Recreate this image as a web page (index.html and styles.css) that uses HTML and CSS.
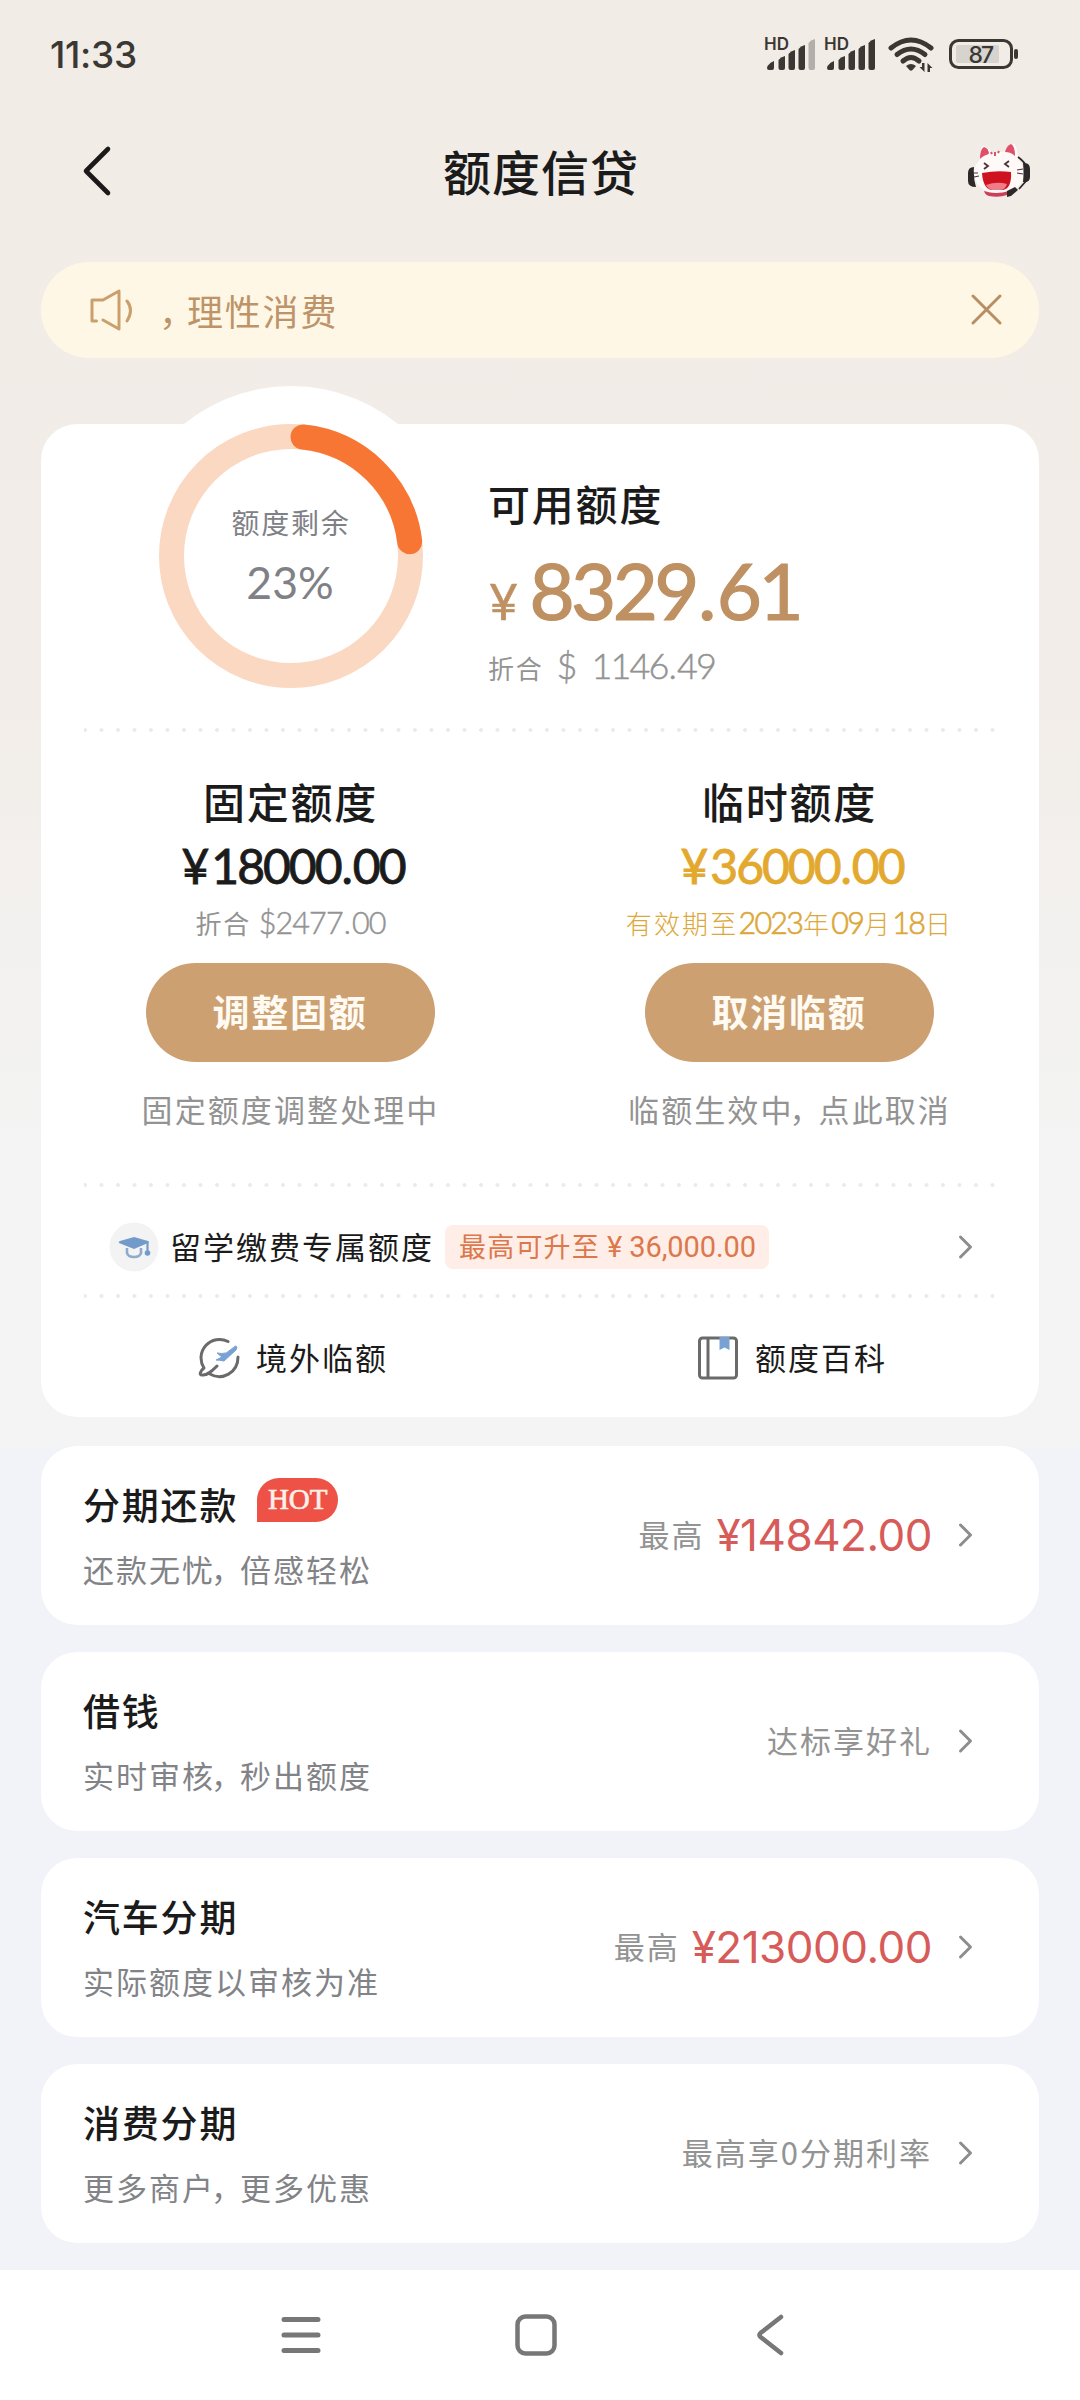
FILE: index.html
```html
<!DOCTYPE html>
<html lang="zh-CN">
<head>
<meta charset="utf-8">
<title>额度信贷</title>
<link rel="stylesheet" href="styles.css">
</head>
<body>
<div class="screen">
  <div class="status">
    <span class="time">11:33</span>
    <svg class="status-icons" width="260" height="44" viewBox="760 30 260 44" fill="#3b3733">
      <g id="sim">
        <text x="764" y="50" class="hd">HD</text>
        <path d="M767.500 66q3-4 6.500-5v7q0 2-2 2h-3q-2 0-2-2z"/>
        <path d="M778.500 60q2-3 6.500-4v12q0 2-2 2h-2.500q-2 0-2-2z"/>
        <path d="M788.500 54q2-3 6.500-4v18q0 2-2 2h-2.500q-2 0-2-2z"/>
        <path d="M798.500 49q2-3 6.500-4v23q0 2-2 2h-2.500q-2 0-2-2z"/>
      </g>
      <path d="M808.500 43q2-3 6.500-4v29q0 2-2 2h-2.500q-2 0-2-2z" fill="#b2aeaa"/>
      <use href="#sim" x="60"/>
      <path d="M868.500 43q2-3 6.500-4v29q0 2-2 2h-2.500q-2 0-2-2z"/>
      <g fill="none" stroke="#3b3733" stroke-width="5" stroke-linecap="round">
        <path d="M891 48q20-16 40 0"/><path d="M897 54.500q14-11 28 0"/><path d="M903 61q8-7 16 0"/>
      </g>
      <path d="M906 66q5-4 10 0l-3.500 4q-1.500 1.500-3 0z"/>
      <path d="M924.500 63v9l-5-5h2.500v-4zM927.500 72v-9l5 5h-2.500v4z"/>
      <rect x="950.500" y="40.500" width="61" height="27" rx="8" fill="none" stroke="#3b3733" stroke-width="3"/>
      <rect x="956" y="45" width="43" height="18" rx="2" fill="#d7d3cf"/>
      <rect x="1014" y="49" width="4" height="10" rx="2"/>
      <text x="968.500" y="62.500" class="battery">87</text>
    </svg>
  </div>

  <header class="header">
    <svg width="32" height="54" viewBox="0 0 32 54" fill="none" stroke="#1c1a19" stroke-width="4.600" stroke-linecap="round" stroke-linejoin="round"><path d="M26 5 4 27l22 22"/></svg>
    <h1 class="title">额度信贷</h1>
    <svg width="64" height="56" viewBox="0 0 64 56">
      <path d="M12 25 14 6q1-5 5-2l8 6 12-2 5-6q4-3 5 2l3 14z" fill="#fffafa"/>
      <path d="M13 16q0-10 4-12 5 1 5 8-5 0-9 4zM38 9q2-7 6-8 4 2 4 12-4-4-10-4z" fill="#e0506a"/>
      <ellipse cx="32" cy="30" rx="25" ry="21" fill="#fff9f8"/>
      <path d="M28 9v4M24 9l1 2M32 8l-1 2" stroke="#d4546a" stroke-width="2"/>
      <path d="M17 20l4 3-4 3M42 18l-4 3 4 3" fill="none" stroke="#47343a" stroke-width="1.800"/>
      <path d="M6 30h5M7 34l5-1M50 27l6-1M50 30l6 1" fill="none" stroke="#47343a" stroke-width="1.200"/>
      <path d="M15 30q15-3 29-1 1 16-8 18H24q-8-2-9-17z" fill="#cf1220"/>
      <path d="M19 42q11-4 21-1-2 6-7 6h-8q-4-1-6-5z" fill="#ef7d87"/>
      <path d="M17 48q12 4 25 0l-2 4q-8 3-18 1-4-1-5-5z" fill="#cb4059"/>
      <path d="M7 24q-6 0-6 6v8q0 6 8 6-3-10-2-20zM56 20q7-1 7 6v8q0 6-7 5 1-9 0-19z" fill="#2d2929"/>
      <path d="M51 14q7 5 9 11M60 37l-8 9" fill="none" stroke="#2d2929" stroke-width="1.800"/>
      <path d="m40 48 8-4 3 3-7 6-4 1z" fill="#2d2929"/>
    </svg>
  </header>

  <div class="notice">
    <svg width="46" height="44" viewBox="0 0 46 44" fill="none" stroke="#cb9f6c" stroke-width="3" stroke-linecap="round" stroke-linejoin="round"><path d="M7.500 33H3V12h11L30 3v38l-16-9M38 13q7 9 0 20"/></svg>
    <span class="notice-text"><span class="lead">，</span>理性消费</span>
    <svg width="34" height="34" viewBox="0 0 34 34" stroke="#b98e60" stroke-width="3" stroke-linecap="round"><path d="M3 3l27 27M30 3 3 30"/></svg>
  </div>

  <main class="quota">
    <section class="summary">
      <div class="dial">
        <svg width="340" height="340" viewBox="-170 -170 340 340" fill="none">
          <circle r="170" fill="#fff"/>
          <circle r="119.500" stroke="#fbd8c2" stroke-width="25"/>
          <path d="M12-119A119.500 119.500 0 0 1 118.700-14.300" stroke="#f87633" stroke-width="25" stroke-linecap="round"/>
        </svg>
        <div class="dial-text"><span class="dial-label">额度剩余</span><span class="dial-value">23%</span></div>
      </div>
      <div class="available">
        <h2 class="heading">可用额度</h2>
        <div class="big"><span class="yen">¥</span>8329<span class="big-dot">.</span>61</div>
        <div class="converted">折合<span class="usd-lg"><i class="dollar">$</i>1146<span class="dot">.</span>49</span></div>
      </div>
    </section>
    <div class="dots"></div>
    <section class="limits">
      <div class="limit">
        <h2 class="heading">固定额度</h2>
        <div class="amount"><span class="sign">¥</span>18000<span class="dot">.</span>00</div>
        <div class="sub">折合 <span class="num-sm">$2477<span class="dot">.</span>00</span></div>
        <button class="btn">调整固额</button>
        <div class="note">固定额度调整处理中</div>
      </div>
      <div class="limit">
        <h2 class="heading">临时额度</h2>
        <div class="amount gold"><span class="sign">¥</span>36000<span class="dot">.</span>00</div>
        <div class="sub expiry">有效期至<span class="num-date">2023</span>年<span class="num-date">09</span>月<span class="num-date">18</span>日</div>
        <button class="btn">取消临额</button>
        <div class="note">临额生效中<span class="comma">，</span>点此取消</div>
      </div>
    </section>
    <div class="dots"></div>
    <section class="study">
      <svg width="50" height="50" viewBox="0 0 50 50"><circle cx="25" cy="25" r="24.500" fill="#f3f3f4"/><path d="M10 21q-1-1 1-2l14-4 14 4q2 1 0 2l-14 6z" fill="#729bca"/><path d="M18 26v5q1 4 7 4t7-4v-5" fill="none" stroke="#8eaacc" stroke-width="2.600"/><path d="M38.500 20v10" stroke="#729bca" stroke-width="2.200"/><circle cx="38.500" cy="31" r="2.800" fill="#729bca"/></svg>
      <span class="study-name">留学缴费专属额度</span>
      <span class="tag">最高可升至<span class="tag-num"> ¥ 36,000.00</span></span>
      <svg class="chevron" width="16" height="26" viewBox="0 0 16 26"><path d="m2.500 3 10 10-10 10"/></svg>
    </section>
    <div class="dots"></div>
    <section class="links">
      <div class="link">
        <svg width="42" height="42" viewBox="0 0 42 42" fill="none" stroke="#6b6a6a" stroke-width="3" stroke-linecap="round" stroke-linejoin="round"><path d="M30 4.500A18.500 18.500 0 0 0 6 31c-4 3-5 7-2 7 5 1 10-4 15-9M12 37c12 7 28-1 28-17"/><path d="M38 9q2 1 0 4L26 24q-5-1-8-1l4-2 2-1q-3-2-5-4 5 1 9 0z" fill="#78a2d4" stroke="#78a2d4" stroke-width="1"/></svg>
        <span>境外临额</span>
      </div>
      <div class="link">
        <svg width="42" height="44" viewBox="0 0 42 44" fill="none" stroke="#6b6a6a" stroke-width="3"><rect x="2.500" y="2" width="37" height="40" rx="3"/><path d="M11 2v40"/><path d="M22.500 1h10v13l-5-2.500-5 2.500z" fill="#78a2d4" stroke="none"/></svg>
        <span>额度百科</span>
      </div>
    </section>
  </main>

  <div class="product">
    <div class="info"><div class="name">分期还款<span class="hot">HOT</span></div><div class="desc">还款无忧<span class="comma">，</span>倍感轻松</div></div>
    <div class="offer">最高<span class="price">¥14842.00</span></div>
    <svg class="chevron" width="16" height="26" viewBox="0 0 16 26"><path d="m2.500 3 10 10-10 10"/></svg>
  </div>
  <div class="product">
    <div class="info"><div class="name">借钱</div><div class="desc">实时审核<span class="comma">，</span>秒出额度</div></div>
    <div class="offer">达标享好礼</div>
    <svg class="chevron" width="16" height="26" viewBox="0 0 16 26"><path d="m2.500 3 10 10-10 10"/></svg>
  </div>
  <div class="product">
    <div class="info"><div class="name">汽车分期</div><div class="desc">实际额度以审核为准</div></div>
    <div class="offer">最高<span class="price">¥213000.00</span></div>
    <svg class="chevron" width="16" height="26" viewBox="0 0 16 26"><path d="m2.500 3 10 10-10 10"/></svg>
  </div>
  <div class="product">
    <div class="info"><div class="name">消费分期</div><div class="desc">更多商户<span class="comma">，</span>更多优惠</div></div>
    <div class="offer">最高享0分期利率</div>
    <svg class="chevron" width="16" height="26" viewBox="0 0 16 26"><path d="m2.500 3 10 10-10 10"/></svg>
  </div>

  <nav class="navbar">
    <svg width="42" height="42" viewBox="0 0 42 42" stroke="#777" stroke-width="5" stroke-linecap="round"><path d="M4 5.500h34M4 21h34M4 36.500h34"/></svg>
    <svg width="42" height="42" viewBox="0 0 42 42" fill="none" stroke="#777" stroke-width="4.500"><rect x="2.500" y="2.500" width="37" height="37" rx="8"/></svg>
    <svg width="42" height="42" viewBox="0 0 42 42" fill="none" stroke="#777" stroke-width="4.500" stroke-linecap="round" stroke-linejoin="round"><path d="M31 3 10.500 19q-2 2 0 4L31 39"/></svg>
  </nav>
</div>
</body>
</html>
```

FILE: styles.css
```css
* { box-sizing: border-box; }
body {
  margin: 0;
  font-family: "Noto Sans CJK SC", sans-serif;
  color: #1c1b1b;
}
svg { display: block; flex: none; }
h1, h2 { margin: 0; font-weight: 500; }

.screen {
  width: 1080px;
  height: 2400px;
  overflow: hidden;
  display: flex;
  flex-direction: column;
  background: linear-gradient(#f1ece6 0, #f2ede8 700px, #f3f2f1 1000px, #f4f4f4 1200px, #f4f4f4 1444px, #f2f3f8 1450px);
}

.status {
  height: 108px;
  padding: 0 60px 0 50px;
  display: flex;
  justify-content: space-between;
  align-items: center;
}
.time { font: 500 37px/40px Inter, sans-serif; color: #3b3733; margin-top: 2px; letter-spacing: -.3px; }
.status-icons { margin-bottom: 4px; }
.hd { font: 600 17px Inter, sans-serif; }
.battery { font: 500 23px Inter, sans-serif; letter-spacing: -2px; }

.header {
  height: 154px;
  padding: 0 49px 28px 82px;
  display: flex;
  align-items: center;
  justify-content: space-between;
}
.title { font-size: 48px; letter-spacing: 1px; line-height: 60px; margin: 0 0 2px 1px; }

.notice {
  height: 96px;
  margin: 0 41px 66px;
  padding: 0 35px 0 48px;
  border-radius: 48px;
  background: #fff7e5;
  display: flex;
  align-items: center;
}
.notice-text { flex: 1; margin-left: 24px; font-size: 36px; letter-spacing: 1.800px; color: #bd9469; }
.lead { letter-spacing: -8px; }

.quota {
  height: 993px;
  margin: 0 41px 29px;
  padding: 0 43px;
  border-radius: 36px;
  background: #fff;
  flex: none;
}
.summary { height: 304px; display: flex; }
.dial { margin: -38px 0 0 37px; display: grid; width: 340px; height: 340px; }
.dial > * { grid-area: 1 / 1; }
.dial-text { display: flex; flex-direction: column; align-items: center; padding-top: 118px; color: #808186; }
.dial-label { font-size: 28px; line-height: 36px; letter-spacing: 1.800px; }
.dial-value { font: 400 44.500px/50px Lato, sans-serif; margin: 17px 2px 0 0; }
.available { margin: 54px 0 0 27px; }
.heading { font-size: 42px; line-height: 50px; letter-spacing: 1.800px; }
.big {
  margin-top: 22px;
  font: 400 78px/80px Lato, sans-serif;
  letter-spacing: -3.600px;
  color: #bf9061;
  -webkit-text-stroke: 1.200px #bf9061;
}
.yen { font-size: 50px; line-height: 0; margin: 0 15px 0 1px; -webkit-text-stroke-width: .6px; }
.big-dot { margin: 0 4px 0 2px; }
.converted { margin-top: 20px; font-size: 26px; line-height: 36px; letter-spacing: 1.800px; color: #939393; }
.usd-lg { font: 300 36px/0 Lato, sans-serif; letter-spacing: -1.900px; margin-left: 13px; -webkit-text-stroke: .5px #939393; }
.dollar { font-style: normal; margin-right: 16px; }
.dot { margin: 0 2px 0 1px; }

.dots {
  height: 4px;
  width: 912px;
  background: radial-gradient(circle at 2px 2px, #ebebeb 1.600px, transparent 2.200px) -1px 0 / 16.500px 4px repeat-x;
}

.limits { height: 451px; display: grid; grid-template-columns: 1fr 1fr; margin: 0 -43px; }
.limit { display: flex; flex-direction: column; align-items: center; padding-top: 44px; }
.amount { margin-top: 15px; font: 400 48px/50px Lato, sans-serif; letter-spacing: -2px; padding-left: 5px; -webkit-text-stroke: .9px currentColor; }
.sign { margin-right: 4px; }
.gold { color: #e3a92f; }
.sub { margin-top: 14px; font-size: 26px; line-height: 36px; letter-spacing: 1.800px; color: #939393; }
.num-sm { font: 300 30.500px/0 Lato, sans-serif; letter-spacing: -.9px; -webkit-text-stroke: .5px #939393; }
.expiry { color: #dca83a; font-weight: 300; letter-spacing: 2.200px; white-space: nowrap; }
.num-date { font: 300 30.500px/0 Lato, sans-serif; letter-spacing: -1.800px; margin-right: 1px; -webkit-text-stroke: .7px #dca83a; }
.btn {
  margin-top: 22px;
  flex: none;
  width: 289px;
  height: 99px;
  border: 0;
  border-radius: 50px;
  background: #cca071;
  color: #fffaf2;
  font: 700 37px/44px "Noto Sans CJK SC", sans-serif;
  letter-spacing: 1.700px;
  padding: 0 1px 4px 0;
}
.note { margin-top: 27px; font-size: 31px; line-height: 40px; letter-spacing: 2.100px; color: #939393; white-space: nowrap; }
.comma { margin-left: -4px; letter-spacing: -2px; }

.study { height: 107px; padding: 13px 22px 0 25px; display: flex; align-items: center; }
.study-name { font-size: 31px; line-height: 40px; letter-spacing: 2px; margin: -3px 0 0 11px; }
.tag {
  margin: 0 auto 0 11px;
  width: 324px;
  height: 44px;
  border-radius: 8px;
  background: #feeee7;
  color: #dc784c;
  font-size: 27px;
  line-height: 42px;
  letter-spacing: 1.200px;
  padding-left: 14px;
  white-space: nowrap;
}
.tag-num { font: 400 29px/0 Roboto, sans-serif; letter-spacing: -.1px; }
.chevron { fill: none; stroke: #8d8d8d; stroke-width: 3; stroke-linecap: round; stroke-linejoin: round; }

.links { height: 119px; margin: 0 -43px; display: grid; grid-template-columns: 1fr 1fr; }
.link { display: flex; align-items: center; gap: 16px; padding-left: 157px; font-size: 31px; line-height: 40px; letter-spacing: 2px; }
.link span { margin-top: -2px; }

.product {
  height: 179px;
  margin: 0 41px 27px;
  padding: 0 65px 0 42px;
  border-radius: 36px;
  background: #fff;
  display: flex;
  flex: none;
}
.info { flex: 1; }
.name { margin-top: 34px; height: 48px; font-size: 37px; line-height: 48px; font-weight: 500; letter-spacing: 1.800px; display: flex; }
.hot {
  width: 81px;
  height: 44px;
  margin: -2px 0 0 19px;
  border-radius: 22px 22px 22px 0;
  background: #ee5146;
  color: #fff0e8;
  font: 400 29px/43px "Liberation Serif", serif;
  letter-spacing: 0;
  text-align: center;
  -webkit-text-stroke: .7px #fff0e8;
}
.desc { margin-top: 21px; font-size: 31px; line-height: 40px; letter-spacing: 2px; color: #828387; }
.offer { margin-top: 68px; font-size: 31px; line-height: 40px; letter-spacing: 2px; color: #939393; }
.price { font: 400 44px/0 Inter, sans-serif; letter-spacing: -.5px; color: #d75b59; margin-left: 12px; vertical-align: -4px; }
.product .chevron { margin: 76px 0 0 26px; }

.navbar {
  flex: 1;
  background: #fff;
  display: flex;
  justify-content: center;
  gap: 193px;
  padding: 44px 8px 0 0;
}
```
